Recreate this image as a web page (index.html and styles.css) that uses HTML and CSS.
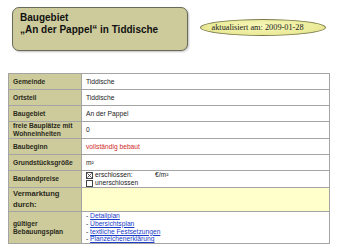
FILE: index.html
```html
<!DOCTYPE html>
<html lang="de">
<head>
<meta charset="utf-8">
<link rel="stylesheet" href="styles.css">
</head>
<body>
<div class="head">
  <div class="title">Baugebiet<br>„An der Pappel“ in Tiddische</div>
  <div class="stamp">aktualisiert am: 2009-01-28</div>
</div>
<table class="info">
  <tr><th>Gemeinde</th><td>Tiddische</td></tr>
  <tr><th>Ortsteil</th><td>Tiddische</td></tr>
  <tr><th>Baugebiet</th><td>An der Pappel</td></tr>
  <tr class="r2"><th>freie Bauplätze mit Wohneinheiten</th><td>0</td></tr>
  <tr><th>Baubeginn</th><td class="red">vollständig bebaut</td></tr>
  <tr><th>Grundstücksgröße</th><td>m²</td></tr>
  <tr class="r2"><th>Baulandpreise</th><td>
    <div class="opt"><span class="cb"><svg viewBox="0 0 7 7" width="7" height="7"><rect x="0.5" y="0.5" width="6" height="6" fill="#fff" stroke="#444"/><path d="M1.3 1.3L5.7 5.7M5.7 1.3L1.3 5.7" stroke="#333" stroke-width="0.8"/></svg></span><span class="optl">erschlossen:</span><span class="unit">€/m²</span></div>
    <div class="opt"><span class="cb"><svg viewBox="0 0 7 7" width="7" height="7"><rect x="0.5" y="0.5" width="6" height="6" fill="#fff" stroke="#444"/></svg></span><span class="optl">unerschlossen</span></div>
  </td></tr>
  <tr class="r3"><th class="top">Vermarktung durch:</th><td class="pale"></td></tr>
  <tr class="r4"><th>gültiger Bebauungsplan</th><td>
    <div>- <a href="#">Detailplan</a></div>
    <div>- <a href="#">Übersichtsplan</a></div>
    <div>- <a href="#">textliche Festsetzungen</a></div>
    <div>- <a href="#">Planzeichenerklärung</a></div>
  </td></tr>
</table>
</body>
</html>
```
FILE: styles.css
```css
html, body { margin: 0; padding: 0; background: #fff; }
body { font-family: "Liberation Sans", Arial, sans-serif; }

.head {
  display: flex;
  align-items: flex-start;
  padding: 7px 0 0 12px;
}
.title {
  box-sizing: border-box;
  width: 176px;
  height: 44px;
  padding: 4px 7px;
  border: 1px solid #6a6a58;
  border-radius: 7px;
  background: #cdcb9b;
  box-shadow: 1px 1px 2px rgba(0,0,0,0.25);
  font-weight: bold;
  font-size: 10px;
  line-height: 11.5px;
  color: #111;
}
.stamp {
  box-sizing: border-box;
  margin: 12px 0 0 12px;
  width: 126px;
  height: 17px;
  padding-left: 10.5px;
  border: 1px solid #7a7a48;
  border-radius: 50%;
  background: radial-gradient(ellipse at 50% 40%, #f7f7b8 0%, #ecec9c 60%, #d6d67e 100%);
  font-family: "Liberation Serif", "Times New Roman", serif;
  font-size: 8.3px;
  line-height: 15px;
  color: #222;
}

.info {
  margin: 22px 0 0 8px;
  width: 322px;
  border-collapse: collapse;
  border: 1px solid #a4a4a4;
  font-size: 6.7px;
  line-height: 7.8px;
  color: #222;
}
.info th, .info td {
  border: 1px solid #a4a4a4;
  height: 15px;
  padding: 0 4px;
  vertical-align: middle;
  text-align: left;
}
.info th {
  width: 64px;
  background: #cdcb9b;
  font-weight: bold;
  color: #2a2a20;
}
.info td { background: #fff; }
.info .r2 th, .info .r2 td { height: 16px; }
.info .r3 th, .info .r3 td { height: 23px; }
.info .r4 th, .info .r4 td { height: 31px; }
.info th.top {
  vertical-align: top;
  padding-top: 0;
  font-size: 7.6px;
  line-height: 11px;
}
.info td.pale { background: #ffffcc; }
.red { color: #d02828; }
.opt { display: flex; align-items: center; height: 8px; }
.cb { display: inline-flex; width: 7px; margin-right: 2px; }
.optl { width: 60px; }
.info a { color: #1a3cc8; text-decoration: underline; }
```
